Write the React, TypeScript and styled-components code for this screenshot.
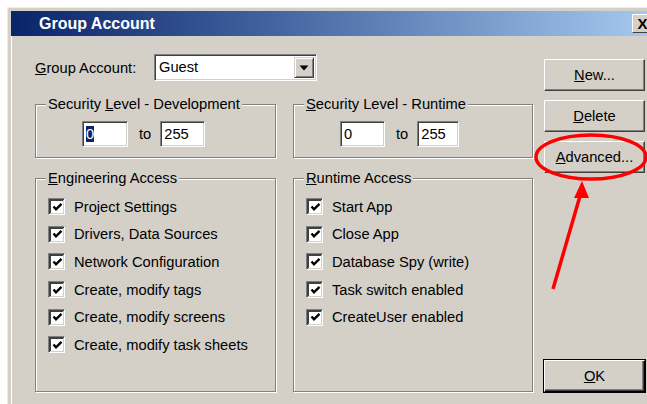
import React from "react";
import styled, { createGlobalStyle } from "styled-components";

const GlobalStyle = createGlobalStyle`
  html, body {
    margin: 0;
    padding: 0;
    background: #fff;
  }
  body {
    font-family: "Liberation Sans", Arial, sans-serif;
    font-size: 14.7px;
    color: #000;
  }
`;

const Page = styled.div`
  position: relative;
  width: 647px;
  height: 404px;
  overflow: hidden;
  box-sizing: border-box;
  padding: 8px 0 0 8px;
  background: #fff;
`;

const Window = styled.div`
  width: 650px;
  box-sizing: border-box;
  background: #d4d0c8;
  border: 3px solid #d4d0c8;
  box-shadow: inset 1px 1px 0 #fff, -1px -1px 0 #ececec;
`;

const TitleBar = styled.div`
  display: flex;
  align-items: center;
  justify-content: space-between;
  height: 25px;
  padding-left: 28px;
  background: linear-gradient(to right, #0a246a, #3a5a98 35%, #a6caf0);
`;

const TitleText = styled.span`
  color: #fff;
  font-weight: bold;
  font-size: 16px;
`;

const CloseButton = styled.div`
  width: 21px;
  height: 19px;
  margin-right: 2px;
  box-sizing: border-box;
  display: flex;
  align-items: center;
  justify-content: center;
  background: #d4d0c8;
  border: 1px solid;
  border-color: #fff #404040 #404040 #fff;
  font-weight: bold;
  font-size: 15px;
`;

const Body = styled.div`
  display: flex;
  align-items: stretch;
  padding: 0 10px 20px 24px;
`;

const Main = styled.div`
  width: 498px;
  display: flex;
  flex-direction: column;
`;

const GroupRow = styled.div`
  display: flex;
  align-items: center;
  margin-top: 18px;
  height: 27px;
`;

const RowLabel = styled.span`
  width: 119px;
`;

const Combo = styled.div`
  display: flex;
  width: 163px;
  height: 27px;
  box-sizing: border-box;
  background: #fff;
  border: 1px solid;
  border-color: #808080 #fff #fff #808080;
  box-shadow: inset 1px 1px 0 #404040, inset -1px -1px 0 #d4d0c8;
`;

const ComboText = styled.span`
  flex: 1;
  padding: 4px 0 0 4px;
`;

const ComboArrow = styled.div`
  width: 20px;
  margin: 2px 2px 2px 0;
  box-sizing: border-box;
  display: flex;
  align-items: center;
  justify-content: center;
  background: #d4d0c8;
  border: 1px solid;
  border-color: #d4d0c8 #404040 #404040 #d4d0c8;
  box-shadow: inset 1px 1px 0 #fff, inset -1px -1px 0 #808080;
`;

const FrameRow = styled.div<{ $top: number }>`
  display: grid;
  grid-template-columns: 241px 240px;
  column-gap: 17px;
  margin-top: ${(p) => p.$top}px;
`;

const Frame = styled.div<{ $height: number }>`
  height: ${(p) => p.$height}px;
  box-sizing: border-box;
  border: 1px solid #808080;
  box-shadow: 1px 1px 0 #fff, inset 1px 1px 0 #fff;
`;

const FrameTitle = styled.div`
  display: table;
  margin: -9px 0 0 10px;
  padding: 0 2px;
  line-height: 17px;
  background: #d4d0c8;
`;

const RangeRow = styled.div`
  display: flex;
  align-items: center;
  margin: 8px 0 0 46px;
`;

const Field = styled.div<{ $width: number }>`
  width: ${(p) => p.$width}px;
  height: 26px;
  box-sizing: border-box;
  padding: 4px 0 0 3px;
  background: #fff;
  border: 1px solid;
  border-color: #808080 #fff #fff #808080;
  box-shadow: inset 1px 1px 0 #404040, inset -1px -1px 0 #d4d0c8;
`;

const Selected = styled.span`
  background: #0a246a;
  color: #fff;
`;

const To = styled.span`
  margin: 0 9px 0 11px;
`;

const CheckList = styled.div`
  margin: 6px 0 0 12px;
`;

const CheckRow = styled.div`
  display: flex;
  align-items: center;
  height: 27.6px;
`;

const Box = styled.span`
  display: inline-flex;
  align-items: center;
  justify-content: center;
  width: 17px;
  height: 17px;
  margin-right: 9px;
  box-sizing: border-box;
  background: #fff;
  border: 1px solid;
  border-color: #808080 #fff #fff #808080;
  box-shadow: inset 1px 1px 0 #404040, inset -1px -1px 0 #d4d0c8,
    inset 2px 2px 0 #404040;
`;

const Buttons = styled.div`
  display: flex;
  flex-direction: column;
  gap: 9px;
  width: 101px;
  margin-left: 11px;
  padding-top: 23px;
`;

const Button = styled.div<{ $default?: boolean }>`
  height: 32px;
  box-sizing: border-box;
  display: flex;
  align-items: center;
  justify-content: center;
  background: #d4d0c8;
  border: 1px solid;
  border-color: #fff #404040 #404040 #fff;
  box-shadow: inset -1px -1px 0 #808080;
  ${(p) =>
    p.$default &&
    `
    margin-top: auto;
    outline: 1px solid #000;
    outline-offset: 0;
    border-color: #fff #000 #000 #fff;
    box-shadow: inset -1px -1px 0 #404040, inset -2px -2px 0 #808080;
  `}
`;

const Markup = styled.svg`
  position: absolute;
  left: 0;
  top: 0;
  pointer-events: none;
`;

const Check = () => (
  <Box>
    <svg width="11" height="11" viewBox="0 0 11 11" style={{ marginLeft: 1, marginTop: 1 }}>
      <path d="M1.5 4.5 L4 7.3 L9.5 1.8" fill="none" stroke="#000" strokeWidth="2.4" />
    </svg>
  </Box>
);

const engineering = [
  "Project Settings",
  "Drivers, Data Sources",
  "Network Configuration",
  "Create, modify tags",
  "Create, modify screens",
  "Create, modify task sheets",
];

const runtime = [
  "Start App",
  "Close App",
  "Database Spy (write)",
  "Task switch enabled",
  "CreateUser enabled",
];

export default function App() {
  return (
    <Page>
      <GlobalStyle />
      <Window>
        <TitleBar>
          <TitleText>Group Account</TitleText>
          <CloseButton>X</CloseButton>
        </TitleBar>
        <Body>
          <Main>
            <GroupRow>
              <RowLabel>
                <u>G</u>roup Account:
              </RowLabel>
              <Combo>
                <ComboText>Guest</ComboText>
                <ComboArrow>
                  <svg width="10" height="6" viewBox="0 0 10 6">
                    <path d="M0.5 0.5 H9.5 L5 5.5 Z" fill="#000" />
                  </svg>
                </ComboArrow>
              </Combo>
            </GroupRow>

            <FrameRow $top={23}>
              <Frame $height={54}>
                <FrameTitle>
                  Security <u>L</u>evel - Development
                </FrameTitle>
                <RangeRow>
                  <Field $width={46}>
                    <Selected>0</Selected>
                  </Field>
                  <To>to</To>
                  <Field $width={45}>255</Field>
                </RangeRow>
              </Frame>
              <Frame $height={54}>
                <FrameTitle>
                  <u>S</u>ecurity Level - Runtime
                </FrameTitle>
                <RangeRow>
                  <Field $width={45}>0</Field>
                  <To>to</To>
                  <Field $width={42}>255</Field>
                </RangeRow>
              </Frame>
            </FrameRow>

            <FrameRow $top={20}>
              <Frame $height={214}>
                <FrameTitle>
                  <u>E</u>ngineering Access
                </FrameTitle>
                <CheckList>
                  {engineering.map((t) => (
                    <CheckRow key={t}>
                      <Check />
                      {t}
                    </CheckRow>
                  ))}
                </CheckList>
              </Frame>
              <Frame $height={214}>
                <FrameTitle>
                  <u>R</u>untime Access
                </FrameTitle>
                <CheckList>
                  {runtime.map((t) => (
                    <CheckRow key={t}>
                      <Check />
                      {t}
                    </CheckRow>
                  ))}
                </CheckList>
              </Frame>
            </FrameRow>
          </Main>

          <Buttons>
            <Button>
              <u>N</u>ew...
            </Button>
            <Button>
              <u>D</u>elete
            </Button>
            <Button>
              <u>A</u>dvanced...
            </Button>
            <Button $default>
              <u>O</u>K
            </Button>
          </Buttons>
        </Body>
      </Window>

      {/* red highlight drawn over the dialog */}
      <Markup width="647" height="404" viewBox="0 0 647 404">
        <ellipse cx="591" cy="157" rx="55" ry="22" fill="none" stroke="#f00" strokeWidth="3.5" />
        <path d="M553 289 L580 196" stroke="#f00" strokeWidth="3.5" fill="none" />
        <path d="M582 181 L574 198 L589 198 Z" fill="#f00" />
      </Markup>
    </Page>
  );
}
